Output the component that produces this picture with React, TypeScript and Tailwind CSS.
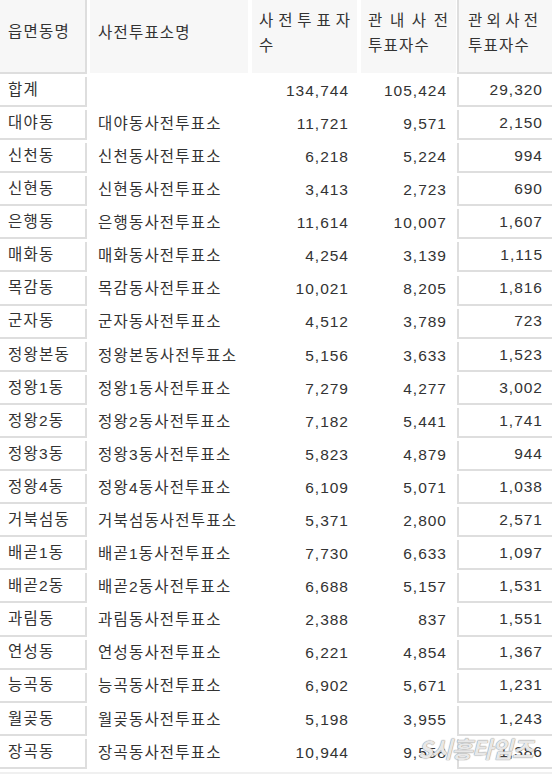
import React from "react";

const rows: [string, string, string, string, string][] = [
  ["합계", "", "134,744", "105,424", "29,320"],
  ["대야동", "대야동사전투표소", "11,721", "9,571", "2,150"],
  ["신천동", "신천동사전투표소", "6,218", "5,224", "994"],
  ["신현동", "신현동사전투표소", "3,413", "2,723", "690"],
  ["은행동", "은행동사전투표소", "11,614", "10,007", "1,607"],
  ["매화동", "매화동사전투표소", "4,254", "3,139", "1,115"],
  ["목감동", "목감동사전투표소", "10,021", "8,205", "1,816"],
  ["군자동", "군자동사전투표소", "4,512", "3,789", "723"],
  ["정왕본동", "정왕본동사전투표소", "5,156", "3,633", "1,523"],
  ["정왕1동", "정왕1동사전투표소", "7,279", "4,277", "3,002"],
  ["정왕2동", "정왕2동사전투표소", "7,182", "5,441", "1,741"],
  ["정왕3동", "정왕3동사전투표소", "5,823", "4,879", "944"],
  ["정왕4동", "정왕4동사전투표소", "6,109", "5,071", "1,038"],
  ["거북섬동", "거북섬동사전투표소", "5,371", "2,800", "2,571"],
  ["배곧1동", "배곧1동사전투표소", "7,730", "6,633", "1,097"],
  ["배곧2동", "배곧2동사전투표소", "6,688", "5,157", "1,531"],
  ["과림동", "과림동사전투표소", "2,388", "837", "1,551"],
  ["연성동", "연성동사전투표소", "6,221", "4,854", "1,367"],
  ["능곡동", "능곡동사전투표소", "6,902", "5,671", "1,231"],
  ["월곶동", "월곶동사전투표소", "5,198", "3,955", "1,243"],
  ["장곡동", "장곡동사전투표소", "10,944", "9,558", "1,386"],
];

// first line of a header spread across the cell (justified look)
const Spread = ({ chars }: { chars: string }) => (
  <div className="flex justify-between">
    {chars.split("").map((c, i) => (
      <span key={i}>{c}</span>
    ))}
  </div>
);

export default function App() {
  return (
    <div
      className="relative w-[552px] h-[774px] overflow-hidden bg-white text-[#333] text-[15.5px]"
      style={{ fontFamily: '"Liberation Sans", "Noto Sans CJK KR", sans-serif' }}
    >
      {/* header */}
      <div className="flex h-[74px] leading-[25px]">
        <div className="w-[87px] bg-[#f7f7f7] border-r-2 border-b-2 border-[#dedede] flex items-center pl-2 pb-[9px] tracking-[1.2px]">
          읍면동명
        </div>
        <div className="ml-[3px] w-[158px] h-[73px] bg-[#f7f7f7] flex items-center pl-2 pb-[9px] tracking-[1.2px]">
          사전투표소명
        </div>
        <div className="ml-[4px] w-[105px] h-[73px] bg-[#f7f7f7] flex flex-col justify-center px-[7px] pb-[7px]">
          <Spread chars="사전투표자" />
          <div>수</div>
        </div>
        <div className="ml-[4px] w-[95px] h-[73px] bg-[#f7f7f7] flex flex-col justify-center pl-[7px] pr-[8px] pb-[7px]">
          <Spread chars="관내사전" />
          <div className="tracking-[1.2px]">투표자수</div>
        </div>
        <div className="ml-[1px] w-[95px] bg-[#f7f7f7] border-l-2 border-b-2 border-[#dedede] flex flex-col justify-center pl-[9px] pr-[14px] pb-[7px]">
          <Spread chars="관외사전" />
          <div className="tracking-[1.2px]">투표자수</div>
        </div>
      </div>

      {/* body */}
      <div className="mt-[3px] flex flex-col gap-[3.1px]">
        {rows.map((r) => (
          <div key={r[0]} className="flex h-[30px] leading-none">
            <div className="w-[87px] border-r-2 border-b-2 border-[#dedede] flex items-center pl-2 pb-[3px] tracking-[1.2px]">
              {r[0]}
            </div>
            <div className="ml-[3px] w-[158px] flex items-center pl-2 pb-[3px] tracking-[1.2px]">{r[1]}</div>
            <div className="ml-[4px] w-[105px] flex items-center justify-end pr-[8px] pb-[3px] tracking-[1px]">
              {r[2]}
            </div>
            <div className="ml-[4px] w-[95px] flex items-center justify-end pr-[9px] pb-[3px] tracking-[1px]">
              {r[3]}
            </div>
            <div className="ml-[1px] w-[95px] border-l-2 border-b-2 border-[#dedede] flex items-center justify-end pr-[9px] pb-[3px] tracking-[1px]">
              {r[4]}
            </div>
          </div>
        ))}
        <div className="h-[8px] bg-[#f0f0f0]" />
      </div>

      {/* watermark */}
      <div
        className="absolute left-[418px] top-[733px] text-[23px] leading-[30px] font-bold italic text-white/80 tracking-[-1px] [text-shadow:0_0_1px_#8a8a8a,0_0_1px_#8a8a8a]"
        style={{ fontFamily: '"Noto Sans CJK KR", sans-serif' }}
      >
        S시흥타임즈
      </div>
    </div>
  );
}
